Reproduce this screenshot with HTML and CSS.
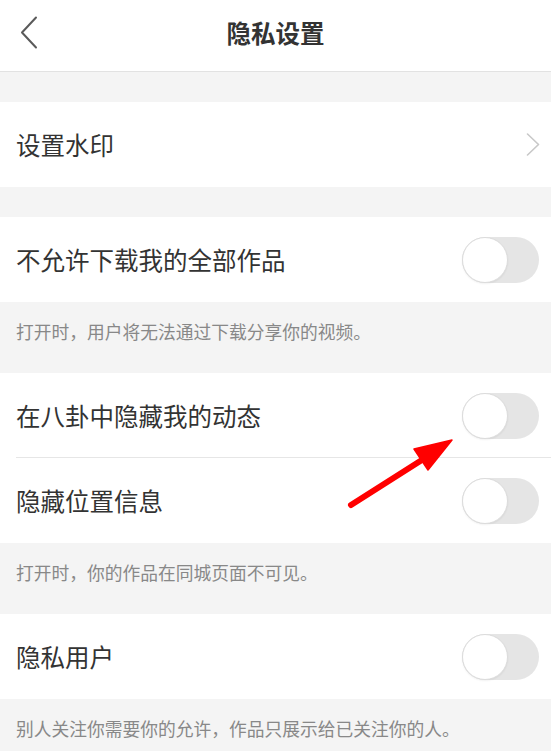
FILE: index.html
```html
<!DOCTYPE html>
<html lang="zh-CN">
<head>
<meta charset="utf-8">
<title>隐私设置</title>
<link rel="stylesheet" href="styles.css">
</head>
<body>
<div class="page">
  <header class="nav">
    <span class="nav-back">
      <svg width="18" height="33" viewBox="0 0 18 33"><path d="M16 1.5 L2 16.5 L16 31.5" fill="none" stroke="#5a5a5a" stroke-width="2" stroke-linecap="round" stroke-linejoin="round"/></svg>
    </span>
    <h1 class="nav-title">隐私设置</h1>
  </header>

  <div class="spacer"></div>
  <div class="row">
    <span class="row-label">设置水印</span>
    <svg class="chevron" width="14" height="23" viewBox="0 0 14 23"><path d="M1.5 1 L12.5 11.5 L1.5 22" fill="none" stroke="#c8c8c8" stroke-width="1.6" stroke-linecap="round" stroke-linejoin="round"/></svg>
  </div>

  <div class="spacer"></div>
  <div class="row">
    <span class="row-label">不允许下载我的全部作品</span>
    <span class="switch"><span class="knob"></span></span>
  </div>
  <p class="note">打开时，用户将无法通过下载分享你的视频。</p>

  <div class="row row-split">
    <span class="row-label">在八卦中隐藏我的动态</span>
    <span class="switch"><span class="knob"></span></span>
  </div>
  <div class="row">
    <span class="row-label">隐藏位置信息</span>
    <span class="switch"><span class="knob"></span></span>
  </div>
  <p class="note">打开时，你的作品在同城页面不可见。</p>

  <div class="row">
    <span class="row-label">隐私用户</span>
    <span class="switch"><span class="knob"></span></span>
  </div>
  <p class="note">别人关注你需要你的允许，作品只展示给已关注你的人。</p>

  <svg class="pointer" width="551" height="751" viewBox="0 0 551 751">
    <line x1="351" y1="505" x2="425" y2="458" stroke="#ff0000" stroke-width="6" stroke-linecap="round"/>
    <polygon points="452,440 414,449 428,470" fill="#ff0000" stroke="#ff0000" stroke-width="1.5" stroke-linejoin="round"/>
  </svg>
</div>
</body>
</html>
```

FILE: styles.css
```css
* {
  box-sizing: border-box;
}

html, body {
  margin: 0;
  padding: 0;
  background: #f4f4f4;
}

body {
  font-family: "Noto Sans CJK SC", "Noto Sans", sans-serif;
  color: #333;
}

.page {
  position: relative;
  width: 551px;
  height: 751px;
  overflow: hidden;
}

.nav {
  position: relative;
  height: 72px;
  background: #fff;
  border-bottom: 1px solid #e2e2e2;
  display: flex;
  align-items: center;
  justify-content: center;
  padding-bottom: 5px;
}

.nav-back {
  position: absolute;
  left: 20px;
  top: 16px;
  display: flex;
}

.nav-title {
  margin: 0;
  font-size: 24.5px;
  font-weight: 700;
  color: #333;
  line-height: 32px;
}

.spacer {
  height: 30px;
}

.row {
  position: relative;
  height: 85px;
  background: #fff;
  display: flex;
  align-items: center;
  justify-content: space-between;
  padding: 0 12px 0 16px;
}

.row-split::after {
  content: "";
  position: absolute;
  left: 16px;
  right: 0;
  bottom: 0;
  height: 1px;
  background: #e6e6e6;
}

.row-label {
  font-size: 24.5px;
  line-height: 32px;
  color: #333;
}

.chevron {
  margin-right: -1px;
}

.switch {
  position: relative;
  width: 77px;
  height: 46px;
  border-radius: 23px;
  background: #e5e5e5;
  flex: none;
}

.knob {
  position: absolute;
  left: 0;
  top: 0;
  width: 46px;
  height: 46px;
  border-radius: 50%;
  background: #fff;
  border: 1px solid #dcdcdc;
  box-shadow: 0 1px 2px rgba(0, 0, 0, 0.06);
}

.note {
  margin: 0;
  height: 71px;
  padding: 16px 16px 0;
  font-size: 17.75px;
  line-height: 26px;
  color: #888;
}

.pointer {
  position: absolute;
  left: 0;
  top: 0;
  pointer-events: none;
}
```
